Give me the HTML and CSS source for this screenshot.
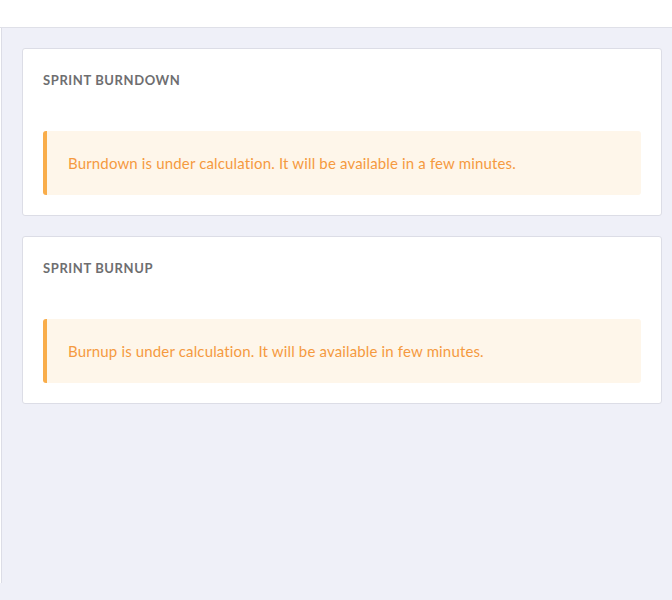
FILE: index.html
```html
<!DOCTYPE html>
<html lang="en">
<head>
  <meta charset="UTF-8">
  <meta name="viewport" content="width=device-width, initial-scale=1.0">
  <title>Sprint reports</title>
  <link rel="stylesheet" href="styles.css">
</head>
<body>
  <div class="topbar"></div>
  <div class="layout">
    <div class="sidebar"></div>
    <div class="main">
      <div class="card">
        <div class="card-header">
          <h3>Sprint Burndown</h3>
        </div>
        <div class="card-body">
          <div class="alert">Burndown is under calculation. It will be available in a few minutes.</div>
        </div>
      </div>

      <div class="card">
        <div class="card-header">
          <h3>Sprint Burnup</h3>
        </div>
        <div class="card-body">
          <div class="alert">Burnup is under calculation. It will be available in few minutes.</div>
        </div>
      </div>
    </div>
  </div>
</body>
</html>
```

FILE: styles.css
```css
*{box-sizing:border-box;margin:0;padding:0;font-family:Lato,"Noto Sans",sans-serif}
body{background:#eff0f8;height:600px;overflow:hidden}
.topbar{height:28px;background:#fff;border-bottom:1px solid #dfe0e8}
.layout{display:flex;align-items:flex-start}
.sidebar{width:2px;height:555px;background:#fff;border-right:1px solid #dcdde6}
.main{flex:1;padding:20px 10px 0 20px}
.card{background:#fff;border:1px solid #dcdde6;border-radius:3px;margin-bottom:20px}
.card-header{padding:22px 20px 20px}
.card-header h3{font-size:13px;line-height:18px;font-weight:700;letter-spacing:.6px;text-transform:uppercase;color:#6e6e70}
.card-body{padding:22px 20px 20px}
.alert{background:#fef6ea;border-left:4px solid #f9ad4a;border-radius:3px;padding:22px 21px;font-size:15px;line-height:20px;letter-spacing:.15px;color:#f59a3f}
```
